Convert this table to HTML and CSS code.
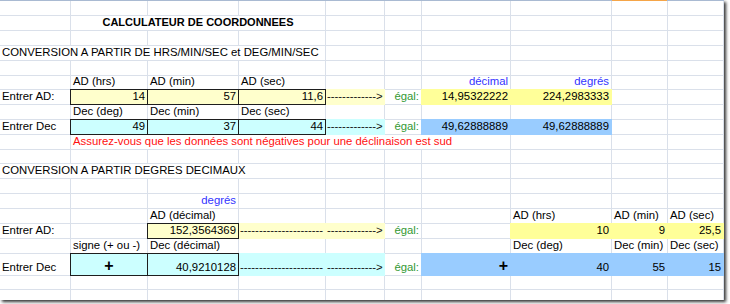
FILE: index.html
```html
<!DOCTYPE html>
<html lang="fr">
<head>
<meta charset="utf-8">
<title>Calculateur de coordonnées</title>
<link rel="stylesheet" href="styles.css">
</head>
<body>
<div class="sheet">
  <div class="colhead">
    <div></div><div></div><div></div><div></div><div></div><div></div><div></div><div></div><div class="sel"></div><div></div>
  </div>
  <div class="grid">
    <!-- r1 -->
    <div class="c"></div><div class="c"></div><div class="c"></div><div class="c"></div><div class="c"></div><div class="c"></div><div class="c"></div><div class="c"></div><div class="c"></div><div class="c"></div>
    <!-- r2 -->
    <div class="c"></div><div class="c title s3">CALCULATEUR DE COORDONNEES</div><div class="c"></div><div class="c"></div><div class="c"></div><div class="c"></div><div class="c"></div><div class="c"></div>
    <!-- r3 -->
    <div class="c"></div><div class="c"></div><div class="c"></div><div class="c"></div><div class="c"></div><div class="c"></div><div class="c"></div><div class="c"></div><div class="c"></div><div class="c"></div>
    <!-- r4 -->
    <div class="c s4">CONVERSION A PARTIR DE HRS/MIN/SEC et DEG/MIN/SEC</div><div class="c"></div><div class="c"></div><div class="c"></div><div class="c"></div><div class="c"></div><div class="c"></div>
    <!-- r5 -->
    <div class="c"></div><div class="c"></div><div class="c"></div><div class="c"></div><div class="c"></div><div class="c"></div><div class="c"></div><div class="c"></div><div class="c"></div><div class="c"></div>
    <!-- r6 -->
    <div class="c"></div><div class="c">AD (hrs)</div><div class="c">AD (min)</div><div class="c">AD (sec)</div><div class="c"></div><div class="c"></div><div class="c r blue">décimal</div><div class="c r blue">degrés</div><div class="c"></div><div class="c"></div>
    <!-- r7 -->
    <div class="c">Entrer AD:</div><div class="c r fy bx">14</div><div class="c r fy bx">57</div><div class="c r fy bx">11,6</div><div class="c dash fy">-------------&gt;</div><div class="c r green">égal:</div><div class="c r fY">14,95322222</div><div class="c r fY">224,2983333</div><div class="c"></div><div class="c"></div>
    <!-- r8 -->
    <div class="c"></div><div class="c">Dec (deg)</div><div class="c">Dec (min)</div><div class="c">Dec (sec)</div><div class="c"></div><div class="c"></div><div class="c"></div><div class="c"></div><div class="c"></div><div class="c"></div>
    <!-- r9 -->
    <div class="c">Entrer Dec</div><div class="c r fc bx">49</div><div class="c r fc bx">37</div><div class="c r fc bx">44</div><div class="c dash fc">-------------&gt;</div><div class="c r green">égal:</div><div class="c r fb">49,62888889</div><div class="c r fb">49,62888889</div><div class="c"></div><div class="c"></div>
    <!-- r10 -->
    <div class="c"></div><div class="c s6 red">Assurez-vous que les données sont négatives pour une déclinaison est sud</div><div class="c"></div><div class="c"></div><div class="c"></div>
    <!-- r11 -->
    <div class="c"></div><div class="c"></div><div class="c"></div><div class="c"></div><div class="c"></div><div class="c"></div><div class="c"></div><div class="c"></div><div class="c"></div><div class="c"></div>
    <!-- r12 -->
    <div class="c s4">CONVERSION A PARTIR DEGRES DECIMAUX</div><div class="c"></div><div class="c"></div><div class="c"></div><div class="c"></div><div class="c"></div><div class="c"></div>
    <!-- r13 -->
    <div class="c"></div><div class="c"></div><div class="c"></div><div class="c"></div><div class="c"></div><div class="c"></div><div class="c"></div><div class="c"></div><div class="c"></div><div class="c"></div>
    <!-- r14 -->
    <div class="c"></div><div class="c"></div><div class="c r blue">degrés</div><div class="c"></div><div class="c"></div><div class="c"></div><div class="c"></div><div class="c"></div><div class="c"></div><div class="c"></div>
    <!-- r15 -->
    <div class="c"></div><div class="c"></div><div class="c">AD (décimal)</div><div class="c"></div><div class="c"></div><div class="c"></div><div class="c"></div><div class="c">AD (hrs)</div><div class="c">AD (min)</div><div class="c">AD (sec)</div>
    <!-- r16 -->
    <div class="c">Entrer AD:</div><div class="c"></div><div class="c r fy bx">152,3564369</div><div class="c dash fy">----------------------</div><div class="c dash fy">-------------&gt;</div><div class="c r green">égal:</div><div class="c"></div><div class="c r fY">10</div><div class="c r fY">9</div><div class="c r fY">25,5</div>
    <!-- r17 -->
    <div class="c"></div><div class="c">signe (+ ou -)</div><div class="c">Dec (décimal)</div><div class="c"></div><div class="c"></div><div class="c"></div><div class="c"></div><div class="c">Dec (deg)</div><div class="c">Dec (min)</div><div class="c">Dec (sec)</div>
    <!-- r18 -->
    <div class="c">Entrer Dec</div><div class="c ctr plus fc bx">+</div><div class="c r fc bx">40,9210128</div><div class="c dash fc">----------------------</div><div class="c dash fc">-------------&gt;</div><div class="c r green">égal:</div><div class="c r plus fb">+</div><div class="c r fb">40</div><div class="c r fb">55</div><div class="c r fb">15</div>
    <!-- r19 -->
    <div class="c"></div><div class="c"></div><div class="c"></div><div class="c"></div><div class="c"></div><div class="c"></div><div class="c"></div><div class="c"></div><div class="c"></div><div class="c"></div>
    <!-- r20 -->
    <div class="c"></div><div class="c"></div><div class="c"></div><div class="c"></div><div class="c"></div><div class="c"></div><div class="c"></div><div class="c"></div><div class="c"></div><div class="c"></div>
  </div>
</div>
</body>
</html>
```
FILE: styles.css
```css
html, body {
  margin: 0;
  padding: 0;
  background: #ffffff;
}

body {
  width: 730px;
  height: 304px;
  overflow: hidden;
  font-family: "Liberation Sans", Arial, sans-serif;
  font-size: 11.35px;
  color: #000000;
}

.sheet {
  width: 724px;
  height: 300px;
  overflow: hidden;
  background: #dae0ea;
  box-shadow: 2px 2px 3px rgba(0, 0, 0, 0.8);
}

.colhead {
  display: grid;
  grid-template-columns: 70px 76px 90px 86px 58px 36px 88px 100px 55px 55px;
  column-gap: 1px;
  height: 1px;
  padding-right: 1px;
  background: #a9bad2;
}

.colhead div {
  background: #a9bad2;
}

.colhead .sel {
  background: #f5a548;
}

.grid {
  display: grid;
  grid-template-columns: 70px 76px 90px 86px 58px 36px 88px 100px 55px 55px;
  grid-template-rows: 14px 14px 14px 14px 14px 13px 14px 14px 14px 14px 13px 14px 14px 14px 14px 14px 14px 21px 13px 10px;
  gap: 1px;
  padding-right: 1px;
  background: #dae0ea;
}

.c {
  background: #ffffff;
  display: flex;
  align-items: flex-end;
  padding: 0 2px 1px 2px;
  line-height: 13px;
  white-space: nowrap;
  overflow: hidden;
  min-width: 0;
}

.r { justify-content: flex-end; }
.ctr { justify-content: center; }

.s3 { grid-column: span 3; justify-content: center; }
.s4 { grid-column: span 4; }
.s6 { grid-column: span 6; }

.title {
  font-weight: bold;
  font-size: 11px;
}

.blue { color: #3333ff; }
.green { color: #339933; }
.red { color: #ff1010; }

.dash {
  padding-left: 1px;
  padding-right: 0;
  color: #111111;
}

.plus {
  font-weight: bold;
  font-size: 16px;
  line-height: 18px;
  padding-bottom: 0;
}

.fy { background: #ffffcc; box-shadow: 0 0 0 1px #ffffcc; }
.fY { background: #ffff99; box-shadow: 0 0 0 1px #ffff99; }
.fc { background: #ccffff; box-shadow: 0 0 0 1px #ccffff; }
.fb { background: #99ccff; box-shadow: 0 0 0 1px #99ccff; }

.bx {
  position: relative;
  box-shadow: 0 0 0 1px #1e1e1e;
}
```
